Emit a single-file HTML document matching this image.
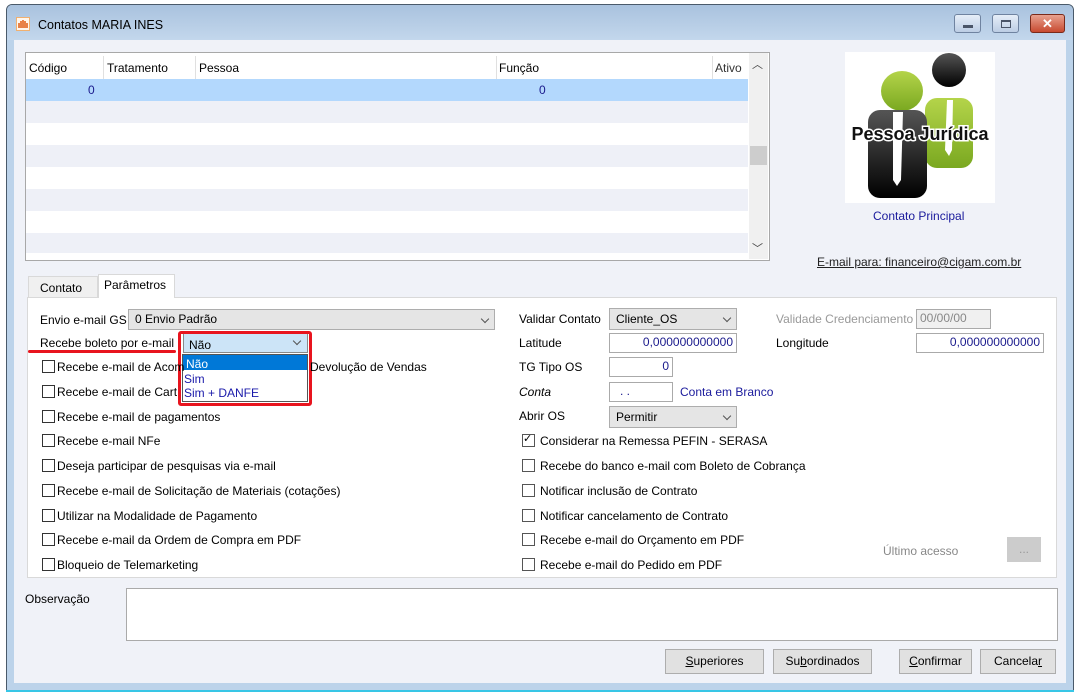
<!DOCTYPE html>
<html><head><meta charset="utf-8"><style>
*{box-sizing:border-box;margin:0;padding:0}
body{width:1080px;height:694px;background:#fff;position:relative;overflow:hidden;font-family:"Liberation Sans",sans-serif;font-size:12px;color:#000}
.a{position:absolute}
.t{position:absolute;white-space:nowrap;font-size:12px;line-height:14px}
.cb{position:absolute;width:13px;height:13px;border:1px solid #333;background:#fff}
.inp{position:absolute;background:#fff;border:1px solid #aaa;font-size:12px;line-height:16px;padding:0 3px;color:#1a1a8c;text-align:right;white-space:nowrap}
.cmb{position:absolute;background:#e5e5e5;border:1px solid #adadad;font-size:12px;line-height:17px;padding:0 6px;white-space:nowrap}
.chev{position:absolute;right:6px;top:6px;width:6px;height:6px;border-right:1px solid #555;border-bottom:1px solid #555;transform:rotate(45deg)}
.btn{position:absolute;background:#e1e1e1;border:1px solid #adadad;text-align:center;line-height:22px;font-size:12px}
.row{position:absolute;left:26px;width:722px;height:22px}
</style></head><body>
<div class="a" style="left:6px;top:4px;width:1068px;height:687px;background:#bcd3ea;border:1px solid #4a5a6a;border-radius:6px 6px 0 0"></div>
<div class="a" style="left:7px;top:5px;width:1066px;height:35px;background:linear-gradient(#a9c2de,#c3d7ec);border-radius:5px 5px 0 0"></div>
<div class="a" style="left:6px;top:690px;width:1068px;height:2px;background:#38c6e6"></div>
<svg class="a" style="left:16px;top:17px" width="14" height="14" viewBox="0 0 14 14"><rect x="0.5" y="0.5" width="13" height="13" fill="#fff6ec" stroke="#f0b070"/><path d="M3 11V6M5 11V4M7 11V3M9 11V4M11 11V6" stroke="#e05a10" stroke-width="1.5"/></svg>
<div class="t" style="left:38px;top:18px;font-size:12.5px">Contatos MARIA INES</div>
<div class="a" style="left:954px;top:14px;width:27px;height:19px;border:1px solid #6f83a0;border-radius:3px;background:linear-gradient(#e6eef8,#bccde4)"><div class="a" style="left:8px;top:10px;width:10px;height:3px;background:#4a5568"></div></div>
<div class="a" style="left:992px;top:14px;width:27px;height:19px;border:1px solid #6f83a0;border-radius:3px;background:linear-gradient(#e6eef8,#bccde4)"><div class="a" style="left:8px;top:5px;width:10px;height:8px;border:1px solid #4a5568;border-top-width:2px"></div></div>
<div class="a" style="left:1030px;top:14px;width:35px;height:19px;border:1px solid #7a2a1a;border-radius:3px;background:linear-gradient(#e8a290,#c84a30);color:#fff;font-weight:bold;text-align:center;line-height:17px;font-size:13px">✕</div>
<div class="a" style="left:14px;top:40px;width:1052px;height:643px;background:#f0f2f8"></div>
<div class="a" style="left:25px;top:52px;width:745px;height:209px;border:1px solid #a8a8a8;background:#fff"></div>
<div class="row" style="top:56px;height:23px;background:#fff"></div>
<div class="a" style="left:103px;top:56px;width:1px;height:23px;background:#e0e0e0"></div>
<div class="a" style="left:195px;top:56px;width:1px;height:23px;background:#e0e0e0"></div>
<div class="a" style="left:496px;top:56px;width:1px;height:23px;background:#e0e0e0"></div>
<div class="a" style="left:712px;top:56px;width:1px;height:23px;background:#e0e0e0"></div>
<div class="t" style="left:29px;top:61px">Código</div>
<div class="t" style="left:107px;top:61px">Tratamento</div>
<div class="t" style="left:199px;top:61px">Pessoa</div>
<div class="t" style="left:499px;top:61px">Função</div>
<div class="t" style="left:715px;top:61px;color:#333">Ativo</div>
<div class="row" style="top:79px;background:#b3d8fd"></div>
<div class="t" style="left:88px;top:83px;color:#1a1a8c">0</div>
<div class="t" style="left:539px;top:83px;color:#1a1a8c">0</div>
<div class="row" style="top:101px;background:#eef0f7"></div>
<div class="row" style="top:145px;background:#eef0f7"></div>
<div class="row" style="top:189px;background:#eef0f7"></div>
<div class="row" style="top:233px;height:20px;background:#eef0f7"></div>
<div class="a" style="left:749px;top:53px;width:19px;height:206px;background:#f0f0f0"></div>
<div class="a" style="left:750px;top:146px;width:17px;height:19px;background:#cdcdcd"></div>
<div class="t" style="left:752px;top:58px;font-size:11px;color:#444">︿</div>
<div class="t" style="left:752px;top:242px;font-size:11px;color:#444">﹀</div>
<div class="a" style="left:845px;top:52px;width:150px;height:151px;background:#fff;overflow:hidden">
<svg width="150" height="151" viewBox="0 0 150 151">
<defs><linearGradient id="g" x1="0" y1="0" x2="0" y2="1"><stop offset="0" stop-color="#b4d44a"/><stop offset="1" stop-color="#7aa820"/></linearGradient>
<linearGradient id="k" x1="0" y1="0" x2="0" y2="1"><stop offset="0" stop-color="#555"/><stop offset="1" stop-color="#000"/></linearGradient></defs>
<ellipse cx="104" cy="18" rx="17" ry="17" fill="url(#k)"/>
<rect x="80" y="46" width="48" height="70" rx="12" fill="url(#g)"/>
<path d="M102 48 L108 48 L107 98 L104 104 L100 98 Z" fill="#fff"/>
<ellipse cx="57" cy="39" rx="21" ry="20" fill="url(#g)"/>
<rect x="23" y="58" width="59" height="88" rx="12" fill="url(#k)"/>
<path d="M48 60 L58 60 L56 128 L52 134 L48 128 Z" fill="#fff"/>
<text x="75" y="88" text-anchor="middle" font-family="Liberation Sans" font-weight="bold" font-size="18" fill="#111" stroke="#fff" stroke-width="3" paint-order="stroke">Pessoa Jurídica</text>
</svg></div>
<div class="t" style="left:873px;top:209px;color:#1a1a9c">Contato Principal</div>
<div class="t" style="left:817px;top:255px;text-decoration:underline;color:#222">E-mail para: financeiro@cigam.com.br</div>
<div class="a" style="left:28px;top:276px;width:70px;height:21px;background:#f0f0f0;border:1px solid #d9d9d9;border-bottom:none"></div>
<div class="t" style="left:40px;top:281px">Contato</div>
<div class="a" style="left:27px;top:297px;width:1030px;height:281px;background:#fff;border:1px solid #d9d9d9"></div>
<div class="a" style="left:98px;top:274px;width:77px;height:24px;background:#fff;border:1px solid #d9d9d9;border-bottom:none"></div>
<div class="t" style="left:104px;top:278px">Parâmetros</div>
<div class="t" style="left:40px;top:313px">Envio e-mail GS</div>
<div class="cmb" style="left:128px;top:309px;width:367px;height:21px;line-height:19px">0 Envio Padrão<div class="chev"></div></div>
<div class="t" style="left:40px;top:336px">Recebe boleto por e-mail</div>
<div class="a" style="left:28px;top:350px;width:148px;height:3px;background:#e8141e;border-radius:2px"></div>
<div class="a" style="left:183px;top:333px;width:125px;height:20px;background:#cce4f7;border:1px solid #888"></div>
<div class="t" style="left:189px;top:338px">Não</div>
<div class="a" style="left:294px;top:338px;width:6px;height:6px;border-right:1px solid #555;border-bottom:1px solid #555;transform:rotate(45deg)"></div>
<div class="a" style="left:182px;top:354px;width:126px;height:48px;background:#fff;border:1px solid #555"></div>
<div class="a" style="left:183px;top:355px;width:124px;height:15px;background:#0078d7"></div>
<div class="t" style="left:186px;top:357px;color:#fff">Não</div>
<div class="t" style="left:184px;top:372px;color:#1a1aaa">Sim</div>
<div class="t" style="left:184px;top:386px;color:#1a1aaa">Sim + DANFE</div>
<div class="a" style="left:178px;top:331px;width:134px;height:75px;border:3px solid #e8141e;border-radius:3px"></div>
<div class="cb" style="left:42px;top:360px"></div><div class="t" style="left:57px;top:360px">Recebe e-mail de Acom</div><div class="t" style="left:310px;top:360px">Devolução de Vendas</div>
<div class="cb" style="left:42px;top:385px"></div><div class="t" style="left:57px;top:385px">Recebe e-mail de Cart</div>
<div class="cb" style="left:42px;top:410px"></div><div class="t" style="left:57px;top:410px">Recebe e-mail de pagamentos</div>
<div class="cb" style="left:42px;top:434px"></div><div class="t" style="left:57px;top:434px">Recebe e-mail NFe</div>
<div class="cb" style="left:42px;top:459px"></div><div class="t" style="left:57px;top:459px">Deseja participar de pesquisas via e-mail</div>
<div class="cb" style="left:42px;top:484px"></div><div class="t" style="left:57px;top:484px">Recebe e-mail de Solicitação de Materiais (cotações)</div>
<div class="cb" style="left:42px;top:509px"></div><div class="t" style="left:57px;top:509px">Utilizar na Modalidade de Pagamento</div>
<div class="cb" style="left:42px;top:533px"></div><div class="t" style="left:57px;top:533px">Recebe e-mail da Ordem de Compra em PDF</div>
<div class="cb" style="left:42px;top:558px"></div><div class="t" style="left:57px;top:558px">Bloqueio de Telemarketing</div>
<div class="t" style="left:519px;top:312px">Validar Contato</div>
<div class="cmb" style="left:609px;top:308px;width:128px;height:22px;line-height:20px">Cliente_OS<div class="chev"></div></div>
<div class="t" style="left:776px;top:312px;color:#999">Validade Credenciamento</div>
<div class="inp" style="left:916px;top:309px;width:75px;height:20px;background:#f0f0f0;color:#888;text-align:left">00/00/00</div>
<div class="t" style="left:519px;top:336px">Latitude</div>
<div class="inp" style="left:609px;top:333px;width:128px;height:20px">0,000000000000</div>
<div class="t" style="left:776px;top:336px">Longitude</div>
<div class="inp" style="left:916px;top:333px;width:128px;height:20px">0,000000000000</div>
<div class="t" style="left:519px;top:360px">TG Tipo OS</div>
<div class="inp" style="left:609px;top:357px;width:64px;height:20px">0</div>
<div class="t" style="left:519px;top:385px;font-style:italic">Conta</div>
<div class="inp" style="left:609px;top:382px;width:64px;height:20px;text-align:left;padding-left:10px">. .</div>
<div class="t" style="left:680px;top:385px;color:#1a1a9c">Conta em Branco</div>
<div class="t" style="left:519px;top:409px">Abrir OS</div>
<div class="cmb" style="left:609px;top:406px;width:128px;height:22px;line-height:20px">Permitir<div class="chev"></div></div>
<div class="cb" style="left:522px;top:434px;border-color:#555"></div><div class="t" style="left:523px;top:432px;font-size:11px">✓</div><div class="t" style="left:540px;top:434px">Considerar na Remessa PEFIN - SERASA</div>
<div class="cb" style="left:522px;top:459px;border-color:#555"></div><div class="t" style="left:540px;top:459px">Recebe do banco e-mail com Boleto de Cobrança</div>
<div class="cb" style="left:522px;top:484px;border-color:#555"></div><div class="t" style="left:540px;top:484px">Notificar inclusão de Contrato</div>
<div class="cb" style="left:522px;top:509px;border-color:#555"></div><div class="t" style="left:540px;top:509px">Notificar cancelamento de Contrato</div>
<div class="cb" style="left:522px;top:533px;border-color:#555"></div><div class="t" style="left:540px;top:533px">Recebe e-mail do Orçamento em PDF</div>
<div class="cb" style="left:522px;top:558px;border-color:#555"></div><div class="t" style="left:540px;top:558px">Recebe e-mail do Pedido em PDF</div>
<div class="t" style="left:883px;top:544px;color:#888">Último acesso</div>
<div class="btn" style="left:1007px;top:537px;width:34px;height:25px;background:#ccc;border-color:#ccc;color:#999">...</div>
<div class="t" style="left:25px;top:592px">Observação</div>
<div class="a" style="left:126px;top:588px;width:932px;height:53px;background:#fff;border:1px solid #aaa"></div>
<div class="btn" style="left:665px;top:649px;width:99px;height:25px"><u>S</u>uperiores</div>
<div class="btn" style="left:773px;top:649px;width:99px;height:25px">Su<u>b</u>ordinados</div>
<div class="btn" style="left:899px;top:649px;width:73px;height:25px"><u>C</u>onfirmar</div>
<div class="btn" style="left:980px;top:649px;width:76px;height:25px">Cancela<u>r</u></div>
</body></html>
